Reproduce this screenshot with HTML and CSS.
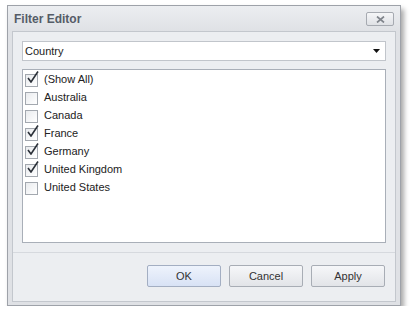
FILE: index.html
```html
<!DOCTYPE html>
<html lang="en">
<head>
    <meta charset="UTF-8">
    <meta name="viewport" content="width=device-width, initial-scale=1.0">
    <title>Filter Editor</title>
    <link rel="stylesheet" href="styles.css">
</head>
<body>
    <div class="window">
        <div class="title-bar">
            <span class="title">Filter Editor</span>
            <button class="close-button">
                <svg width="9" height="7" viewBox="0 0 9 7"><path d="M1 0.5 L8 6.5 M8 0.5 L1 6.5" stroke="#80858c" stroke-width="1.7"/></svg>
            </button>
        </div>

        <div class="content">
            <div class="combo">
                <span>Country</span>
                <svg width="7" height="4" viewBox="0 0 7 4"><path d="M0 0 H7 L3.5 4 Z" fill="#111"/></svg>
            </div>

            <div class="list">
                <div class="item checked">(Show All)</div>
                <div class="item">Australia</div>
                <div class="item">Canada</div>
                <div class="item checked">France</div>
                <div class="item checked">Germany</div>
                <div class="item checked">United Kingdom</div>
                <div class="item">United States</div>
            </div>

            <div class="buttons">
                <button class="btn default">OK</button>
                <button class="btn">Cancel</button>
                <button class="btn">Apply</button>
            </div>
        </div>
    </div>
</body>
</html>
```

FILE: styles.css
```css
* {
    margin: 0;
    padding: 0;
    box-sizing: border-box;
    font-family: "Liberation Sans", Arial, sans-serif;
}
body {
    background: white;
    color: #222;
}
.window {
    margin: 5px 0 0 7px;
    width: 394px;
    height: 301px;
    border: 1px solid #9ea2a9;
    background: #dfe1e5;
    padding: 0 4px 3px 4px;
    box-shadow: 3px 4px 5px rgba(0, 0, 0, 0.35);
    display: flex;
    flex-direction: column;
}
.title-bar {
    height: 25px;
    display: flex;
    align-items: center;
    justify-content: space-between;
    background: linear-gradient(#eceef1, #dfe1e5);
    margin: 0 -4px;
    padding: 0 6px 0 6px;
}
.title {
    font-weight: bold;
    font-size: 12px;
    color: #555c67;
    margin-top: 1px;
}
.close-button {
    width: 28px;
    height: 14px;
    border: 1px solid #a6aab1;
    border-radius: 2px;
    background: linear-gradient(#f5f6f8, #dfe1e5);
    display: flex;
    align-items: center;
    justify-content: center;
    margin-top: 1px;
}
.content {
    flex: 1;
    border: 1px solid #c3c7cd;
    background: #eceef1;
    padding: 9px 9px 0 9px;
    display: flex;
    flex-direction: column;
}
.combo {
    height: 20px;
    border: 1px solid #c1c5cb;
    background: white;
    display: flex;
    align-items: center;
    justify-content: space-between;
    padding: 0 5px 0 2px;
    font-size: 11px;
    color: #222;
}
.list {
    margin-top: 8px;
    height: 174px;
    border: 1px solid #a9afb8;
    background: white;
}
.item {
    height: 18px;
    display: flex;
    align-items: center;
    font-size: 11px;
    color: #222;
    padding-left: 21px;
    position: relative;
}
.item::before {
    content: "";
    position: absolute;
    left: 2px;
    top: 4px;
    width: 11px;
    height: 11px;
    border: 1px solid #a3a8af;
    background: linear-gradient(135deg, #e9ebee, #ffffff);
}
.item.checked::after {
    content: "";
    position: absolute;
    left: 4px;
    top: 1px;
    width: 12px;
    height: 12px;
    background: url("data:image/svg+xml,%3Csvg xmlns='http://www.w3.org/2000/svg' width='12' height='12' viewBox='0 0 12 12'%3E%3Cpath d='M1 7 L4 11 L11 0.5' fill='none' stroke='%232b3038' stroke-width='1.6'/%3E%3C/svg%3E");
}
.buttons {
    margin: 9px -9px 0 -9px;
    border-top: 1px solid #d6d9de;
    flex: 1;
    display: flex;
    justify-content: flex-end;
    align-items: flex-start;
    gap: 8px;
    padding: 12px 10px 0 0;
}
.btn {
    width: 74px;
    height: 22px;
    border: 1px solid #a8adb5;
    border-radius: 2px;
    background: linear-gradient(#f6f7f9, #e2e4e8);
    font-size: 11px;
    color: #333;
}
.btn.default {
    border-color: #a3aec2;
    background: linear-gradient(#eef3fc, #d8e2f5);
}
```
